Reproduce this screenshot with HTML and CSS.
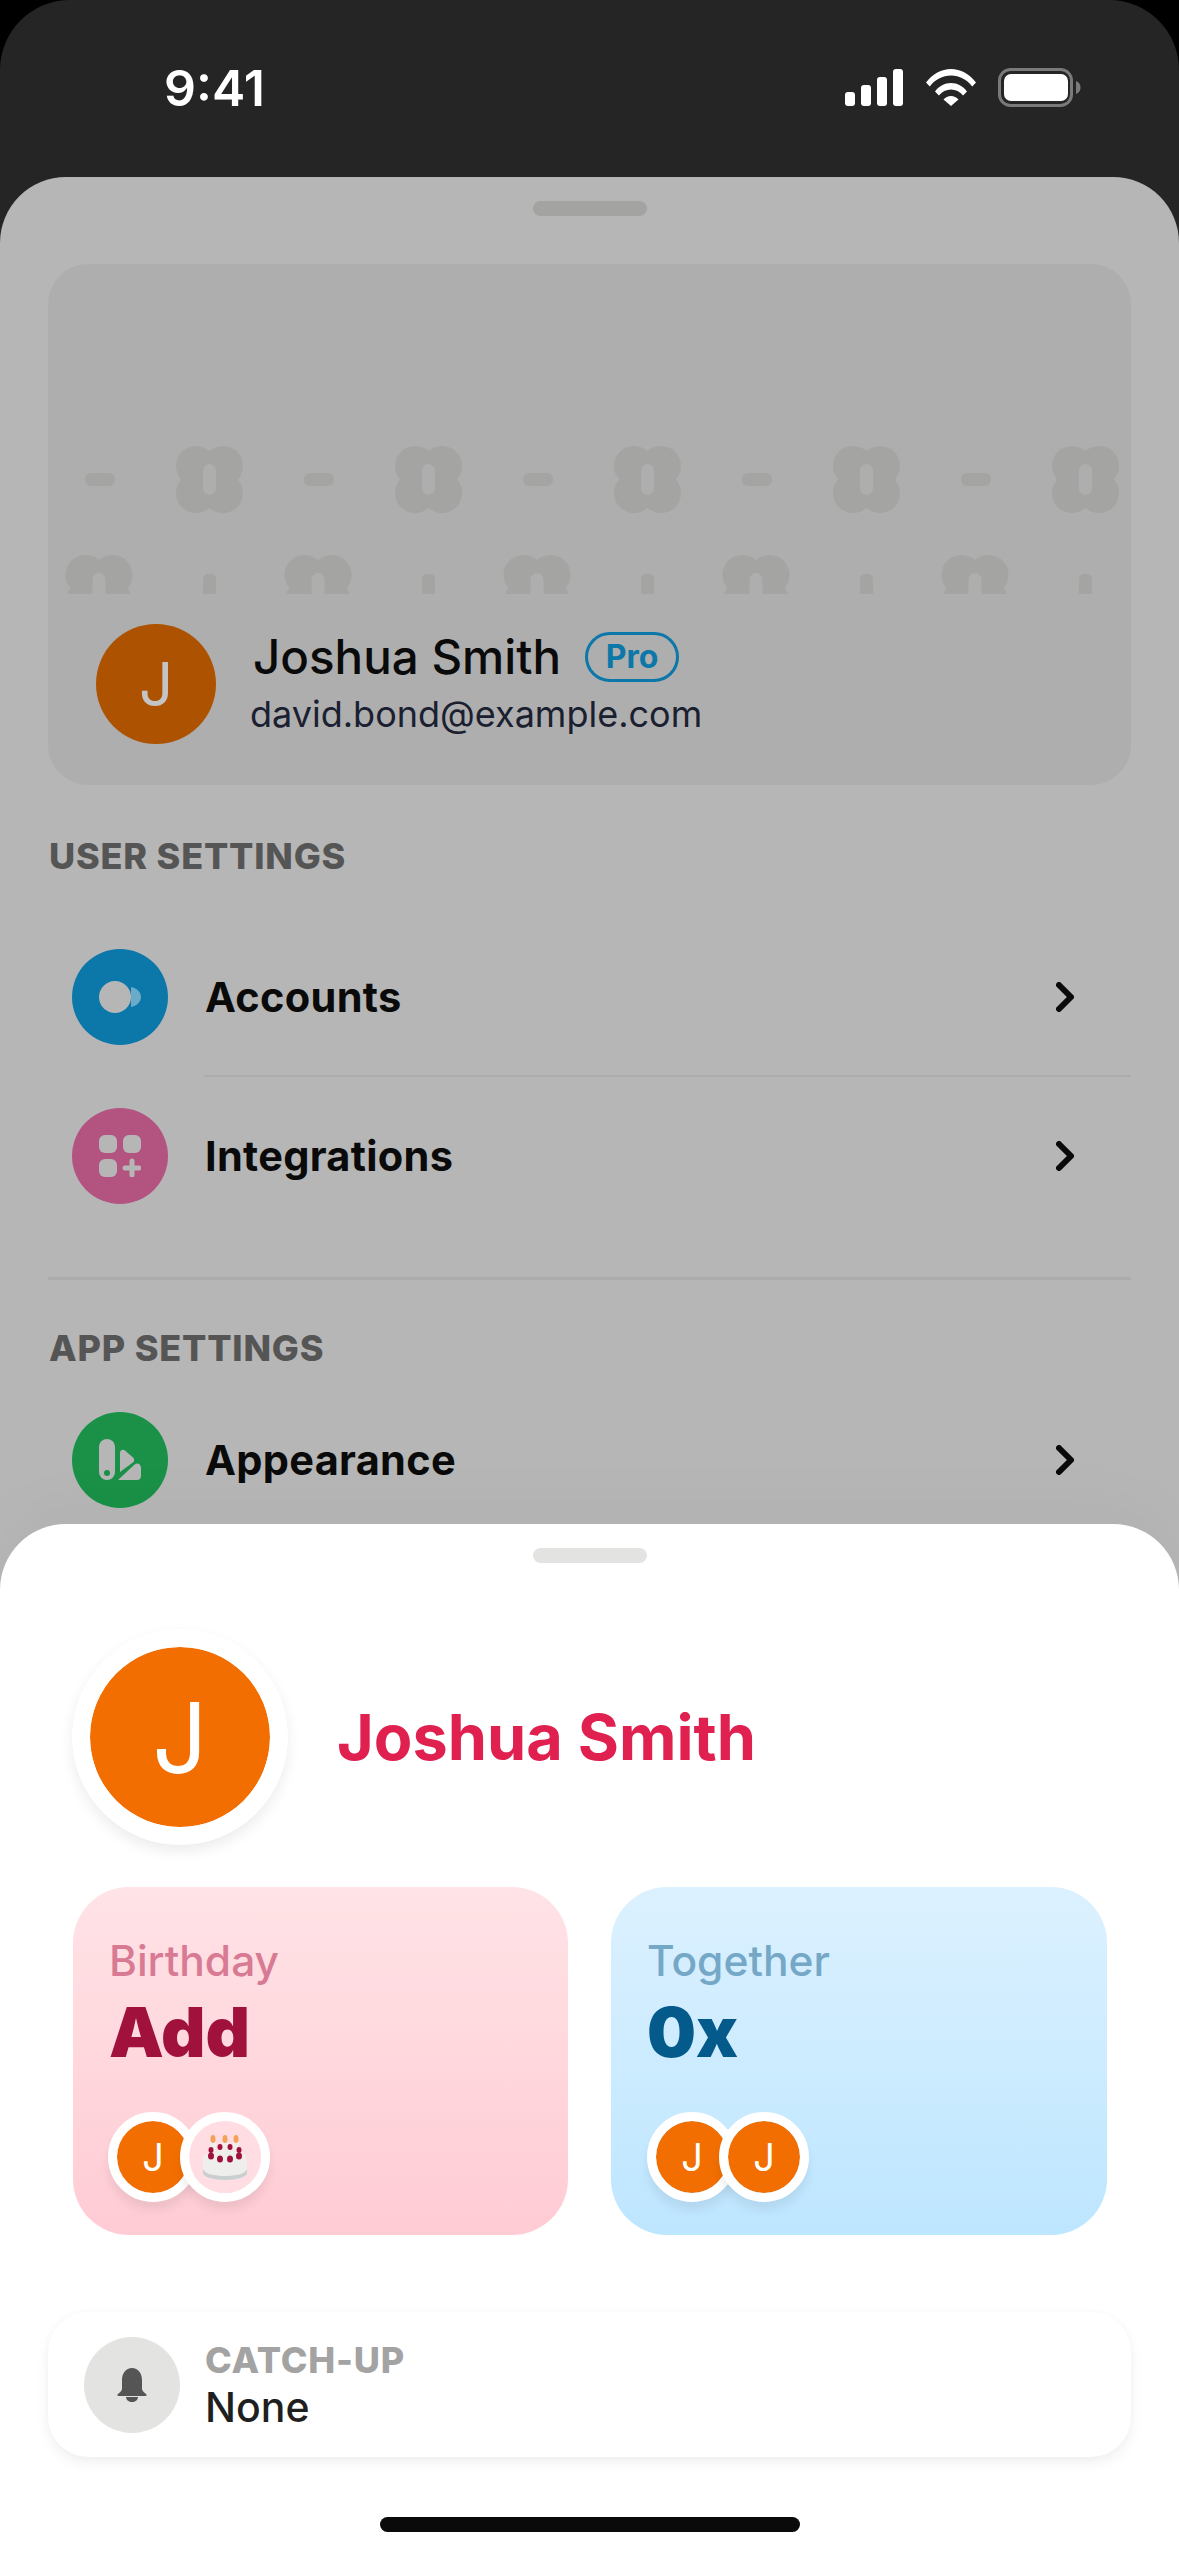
FILE: index.html
```html
<!DOCTYPE html>
<html lang="en">
<head>
  <meta charset="UTF-8" />
  <meta name="viewport" content="width=device-width, initial-scale=1.0"/>
  <title>Profile</title>
  <link rel="stylesheet" href="styles.css">
</head>
<body>
  <div class="phone">
    <div class="status-bar">
      <span class="clock">9:41</span>
      <div class="status-icons">
        <svg width="58" height="37" viewBox="0 0 58 37" fill="#fff">
          <rect x="0" y="23" width="10" height="14" rx="3"/>
          <rect x="16" y="16" width="10" height="21" rx="3"/>
          <rect x="32" y="8" width="10" height="29" rx="3"/>
          <rect x="48" y="0" width="10" height="37" rx="3"/>
        </svg>
        <svg class="wifi" width="50" height="37" viewBox="0 0 50 37" fill="#fff">
          <path d="M0 13.500C6.500 4.800 15.500 0 25 0s18.500 4.800 25 13.500l-3.800 4C41 10.500 33.500 6.500 25 6.500S9 10.500 3.800 17.500z"/>
          <path d="M9 22.500C13 17 18.800 14 25 14s12 3 16 8.500l-3.900 4C34 22.600 29.700 20.400 25 20.400s-9 2.200-12.100 6.100z"/>
          <path d="M17.500 30.500c2-2.200 4.600-3.400 7.500-3.400s5.500 1.200 7.500 3.400L25 37z"/>
        </svg>
        <svg class="battery" width="83" height="39" viewBox="0 0 83 39">
          <rect x="1.500" y="1.500" width="72" height="36" rx="11" fill="none" stroke="#7a7a7a" stroke-width="3"/>
          <rect x="6" y="6" width="64" height="27" rx="7" fill="#fff"/>
          <path d="M78 13c3 1 4.500 3.500 4.500 6.500S81 25 78 26z" fill="#7a7a7a"/>
        </svg>
      </div>
    </div>

    <div class="settings-sheet">
      <div class="grabber"></div>

      <div class="profile-card">
        <svg class="pattern" width="1082" height="330" viewBox="0 0 1082 330" fill="#a4a4a2">
          <defs>
            <g id="clover">
              <circle cx="-13.500" cy="-13.500" r="20"/>
              <circle cx="13.500" cy="-13.500" r="20"/>
              <circle cx="-13.500" cy="13.500" r="20"/>
              <circle cx="13.500" cy="13.500" r="20"/>
              <rect x="-6.500" y="-15.500" width="13" height="31" rx="6.500" fill="#aeaeae"/>
            </g>
            <g id="figure">
              <rect x="37" y="209" width="30" height="13" rx="6"/>
              <use href="#clover" x="161.500" y="215.500"/>
              <use href="#clover" x="51" y="324.500"/>
              <rect x="155" y="310" width="13" height="24" rx="5"/>
            </g>
          </defs>
          <use href="#figure"/>
          <use href="#figure" x="219"/>
          <use href="#figure" x="438"/>
          <use href="#figure" x="657"/>
          <use href="#figure" x="876"/>
        </svg>
        <div class="profile-row">
          <div class="avatar avatar-dim">J</div>
          <div class="profile-text">
            <div class="profile-name">Joshua Smith <span class="badge">Pro</span></div>
            <div class="profile-email">david.bond@example.com</div>
          </div>
        </div>
      </div>

      <h2 class="section-title">USER SETTINGS</h2>
      <div class="menu-row">
        <div class="menu-icon blue">
          <svg width="42" height="32" viewBox="0 0 42 32">
            <path d="M32 6c5.500 1 10 5 10 10s-4.500 9-10 10z" fill="#6aabca"/>
            <circle cx="16" cy="16" r="16" fill="#b6b6b6"/>
          </svg>
        </div>
        <span class="menu-label">Accounts</span>
        <svg class="chevron" width="18" height="30" viewBox="0 0 18 30"><path d="M3 3l12 12L3 27" fill="none" stroke="#0a0a0a" stroke-width="6" stroke-linecap="round" stroke-linejoin="round"/></svg>
      </div>
      <div class="menu-divider"></div>
      <div class="menu-row">
        <div class="menu-icon pink">
          <svg width="42" height="42" viewBox="0 0 42 42" fill="#b6b6b6">
            <rect width="18" height="18" rx="6"/>
            <rect x="24" width="18" height="18" rx="6"/>
            <rect y="24" width="18" height="18" rx="6"/>
            <path d="M33 26v14M26 33h14" stroke="#b6b6b6" stroke-width="5" stroke-linecap="round"/>
          </svg>
        </div>
        <span class="menu-label">Integrations</span>
        <svg class="chevron" width="18" height="30" viewBox="0 0 18 30"><path d="M3 3l12 12L3 27" fill="none" stroke="#0a0a0a" stroke-width="6" stroke-linecap="round" stroke-linejoin="round"/></svg>
      </div>

      <div class="section-divider"></div>

      <h2 class="section-title app-title">APP SETTINGS</h2>
      <div class="menu-row">
        <div class="menu-icon green">
          <svg width="42" height="42" viewBox="0 0 42 42" fill="#b6b6b6">
            <rect width="16" height="41" rx="8"/>
            <circle cx="8" cy="34" r="3" fill="#1a9146"/>
            <path d="M21 14c0-3 3-4 5-2.500l8 7c1.500 1.300 1.500 3 .5 4.500L21 33z"/>
            <path d="M19 41l16-15c1-1 2-1.500 3-1.500 2.500 0 4 2 4 4.500v8c0 2.500-1.500 4-4 4z"/>
          </svg>
        </div>
        <span class="menu-label">Appearance</span>
        <svg class="chevron" width="18" height="30" viewBox="0 0 18 30"><path d="M3 3l12 12L3 27" fill="none" stroke="#0a0a0a" stroke-width="6" stroke-linecap="round" stroke-linejoin="round"/></svg>
      </div>
    </div>

    <div class="contact-sheet">
      <div class="grabber light"></div>

      <div class="contact-head">
        <div class="avatar avatar-big">J</div>
        <div class="contact-name">Joshua Smith</div>
      </div>

      <div class="stat-cards">
        <div class="stat-card rose">
          <div class="stat-label">Birthday</div>
          <div class="stat-value">Add</div>
          <div class="avatar-pair">
            <div class="avatar avatar-small">J</div>
            <div class="avatar avatar-small cake">
              <svg width="44" height="45" viewBox="0 0 44 45">
                <g fill="#efefed">
                  <rect x="7" y="7" width="6" height="18"/>
                  <rect x="19" y="7" width="6" height="18"/>
                  <rect x="30" y="7" width="6" height="18"/>
                </g>
                <g fill="#f4a259">
                  <ellipse cx="10" cy="4" rx="2.500" ry="4"/>
                  <ellipse cx="22" cy="4" rx="2.500" ry="4"/>
                  <ellipse cx="33" cy="4" rx="2.500" ry="4"/>
                </g>
                <path d="M0 24c0-6 10-9 22-9s22 3 22 9v14c0 4-10 7-22 7S0 42 0 38z" fill="#eeeeec"/>
                <path d="M0 34v4c0 4 10 7 22 7s22-3 22-7v-4c-2 5-11 7-22 7S2 39 0 34z" fill="#c9ced0"/>
                <g fill="#a0123c">
                  <ellipse cx="8" cy="15" rx="2.500" ry="3"/>
                  <ellipse cx="17" cy="12" rx="2.500" ry="3"/>
                  <ellipse cx="27" cy="12" rx="2.500" ry="3"/>
                  <ellipse cx="36" cy="15" rx="2.500" ry="3"/>
                  <ellipse cx="8" cy="21" rx="3" ry="3.500"/>
                  <ellipse cx="17" cy="24" rx="3" ry="3.500"/>
                  <ellipse cx="27" cy="24" rx="3" ry="3.500"/>
                  <ellipse cx="36" cy="21" rx="3" ry="3.500"/>
                </g>
              </svg>
            </div>
          </div>
        </div>
        <div class="stat-card sky">
          <div class="stat-label">Together</div>
          <div class="stat-value">0x</div>
          <div class="avatar-pair">
            <div class="avatar avatar-small">J</div>
            <div class="avatar avatar-small">J</div>
          </div>
        </div>
      </div>

      <div class="catchup-card">
        <div class="bell-circle">
          <svg width="30" height="34" viewBox="0 0 30 34" fill="#555">
            <path d="M15 0c6 0 10 5 10 12v9c0 2 2 3 4 5 1 1 1 2-1 2H2c-2 0-2-1-1-2 2-2 4-3 4-5v-9C5 5 9 0 15 0z"/>
            <path d="M9 29h12c0 3-3 5-6 5s-6-2-6-5z"/>
          </svg>
        </div>
        <div>
          <div class="catchup-label">CATCH-UP</div>
          <div class="catchup-value">None</div>
        </div>
      </div>

      <div class="home-indicator"></div>
    </div>
  </div>
</body>
</html>
```

FILE: styles.css
```css
:root {
  --dim-sheet: #b6b6b6;
  --orange: #f26e00;
}

body {
  margin: 0;
  background-color: #000;
  font-family: Inter, 'Liberation Sans', sans-serif;
}

.phone {
  position: relative;
  width: 1179px;
  height: 2556px;
  overflow: hidden;
  background-color: #252525;
  border-radius: 70px 70px 0 0;
}

/* status bar */
.status-bar {
  display: flex;
  justify-content: space-between;
  height: 177px;
  box-sizing: border-box;
  padding: 68px 98px 0 164px;
}

.clock {
  color: #fff;
  font-size: 50px;
  font-weight: 600;
  line-height: 40px;
}

.status-icons {
  display: flex;
  align-items: flex-start;
  gap: 23px;
}

.status-icons svg {
  margin-top: 1px;
}

.status-icons .battery {
  margin-top: 0;
  margin-left: -1px;
}

/* settings sheet behind */
.settings-sheet {
  height: 2379px;
  box-sizing: border-box;
  padding: 24px 48px 0;
  background-color: var(--dim-sheet);
  border-radius: 66px 66px 0 0;
}

.grabber {
  width: 114px;
  height: 15px;
  margin: 0 auto;
  background-color: #a3a3a2;
  border-radius: 8px;
}

.grabber.light {
  background-color: #e3e3e1;
}

.profile-card {
  position: relative;
  height: 521px;
  margin-top: 48px;
  background-color: #aeaeae;
  border-radius: 40px;
}

.pattern {
  position: absolute;
  top: 0;
  left: 0;
}

.profile-row {
  position: absolute;
  left: 48px;
  top: 360px;
  display: flex;
  align-items: center;
  gap: 34px;
}

.avatar {
  display: flex;
  align-items: center;
  justify-content: center;
  flex: none;
  border-radius: 50%;
  color: #fff;
  font-weight: 400;
  background-color: var(--orange);
}

.avatar-dim {
  width: 120px;
  height: 120px;
  background-color: #ad5200;
  color: #c4c4c4;
  font-size: 60px;
}

.profile-name {
  display: flex;
  align-items: center;
  gap: 24px;
  margin-top: -2px;
  margin-left: 3px;
  color: #0a0a0a;
  font-size: 47.500px;
  font-weight: 500;
  line-height: 52px;
}

.badge {
  box-sizing: border-box;
  width: 94px;
  height: 50px;
  border: 3px solid #0c77a9;
  border-radius: 25px;
  color: #0c77a9;
  font-size: 32px;
  font-weight: 700;
  line-height: 44px;
  text-align: center;
}

.profile-email {
  margin-top: 9px;
  color: #1a2030;
  font-size: 36px;
  line-height: 44px;
}

.section-title {
  margin: 50px 0 0 1px;
  color: #555;
  font-size: 36px;
  font-weight: 800;
  line-height: 42px;
  letter-spacing: 0.8px;
}

.app-title {
  margin-top: 47px;
}

.menu-row {
  display: flex;
  align-items: center;
  height: 96px;
  margin-left: 24px;
}

.section-title + .menu-row {
  margin-top: 72px;
}

.section-title.app-title + .menu-row {
  margin-top: 43px;
}

.menu-icon {
  display: flex;
  align-items: center;
  justify-content: center;
  flex: none;
  width: 96px;
  height: 96px;
  border-radius: 50%;
}

.menu-icon.blue { background-color: #0c77a9; }
.menu-icon.pink { background-color: #b25380; }
.menu-icon.green { background-color: #1a9146; }

.menu-label {
  flex: 1;
  margin-left: 37px;
  color: #0a0a0a;
  font-size: 41.500px;
  font-weight: 700;
  letter-spacing: 0.3px;
}

.chevron {
  margin-right: 57px;
}

.menu-divider {
  height: 2px;
  margin: 30px 0 31px 156px;
  background-color: #acacac;
}

.section-divider {
  height: 3px;
  margin-top: 73px;
  background-color: #acacac;
}

/* contact sheet on top */
.contact-sheet {
  position: absolute;
  top: 1524px;
  left: 0;
  right: 0;
  bottom: 0;
  padding-top: 24px;
  background-color: #fff;
  border-radius: 66px 66px 0 0;
  box-shadow: 0 -30px 60px rgba(0, 0, 0, 0.02);
}

.contact-head {
  display: flex;
  align-items: center;
  gap: 49px;
  margin: 66px 0 0 72px;
}

.avatar-big {
  box-sizing: border-box;
  width: 216px;
  height: 216px;
  border: 18px solid #fff;
  background-clip: padding-box;
  font-size: 97px;
  box-shadow: 0 6px 14px rgba(0, 0, 0, 0.08);
}

.contact-name {
  color: #e0204f;
  font-size: 63px;
  font-weight: 700;
}

.stat-cards {
  display: flex;
  gap: 43px;
  margin: 42px 0 0 73px;
}

.stat-card {
  box-sizing: border-box;
  width: 495px;
  height: 348px;
  padding: 50px 36px 0;
  border-radius: 56px;
}

.stat-card.rose {
  background: linear-gradient(#ffe3e6, #ffcbd4);
}

.stat-card.sky {
  width: 496px;
  background: linear-gradient(#dcf1ff, #bde6ff);
}

.stat-label {
  font-size: 42.500px;
  font-weight: 500;
  line-height: 48px;
}

.rose .stat-label { color: #d87a93; }
.sky .stat-label { color: #74a8c6; }

.stat-value {
  margin-top: 5px;
  font-size: 69px;
  font-weight: 900;
  line-height: 84px;
}

.rose .stat-value { color: #a0123c; }
.sky .stat-value { color: #055a8c; }

.avatar-pair {
  display: flex;
  margin-top: 38px;
}

.rose .avatar-pair {
  margin-left: -1px;
}

.avatar-small {
  box-sizing: border-box;
  width: 90px;
  height: 90px;
  border: 9px solid #fff;
  background-clip: padding-box;
  font-size: 38px;
  box-shadow: 0 8px 10px rgba(0, 0, 0, 0.07);
}

.avatar-small + .avatar-small {
  margin-left: -18px;
  position: relative;
}

.avatar-small.cake {
  background-color: #ffdde3;
}

.catchup-card {
  display: flex;
  align-items: center;
  gap: 25px;
  box-sizing: border-box;
  height: 145px;
  margin: 77px 48px 0 48px;
  padding-left: 36px;
  background-color: #fff;
  border-radius: 40px;
  box-shadow: 0 6px 14px rgba(0, 0, 0, 0.06), 0 0 10px rgba(0, 0, 0, 0.02);
}

.bell-circle {
  display: flex;
  align-items: center;
  justify-content: center;
  width: 96px;
  height: 96px;
  background-color: #e3e3e1;
  border-radius: 50%;
}

.catchup-label {
  color: #a3a3a3;
  font-size: 36px;
  font-weight: 800;
  line-height: 42px;
  letter-spacing: 0.8px;
}

.catchup-value {
  margin-top: 3px;
  color: #1f1f1f;
  font-size: 41px;
  font-weight: 500;
  line-height: 46px;
}

.home-indicator {
  width: 420px;
  height: 15px;
  margin: 60px auto 0;
  background-color: #0a0a0a;
  border-radius: 8px;
}
```
